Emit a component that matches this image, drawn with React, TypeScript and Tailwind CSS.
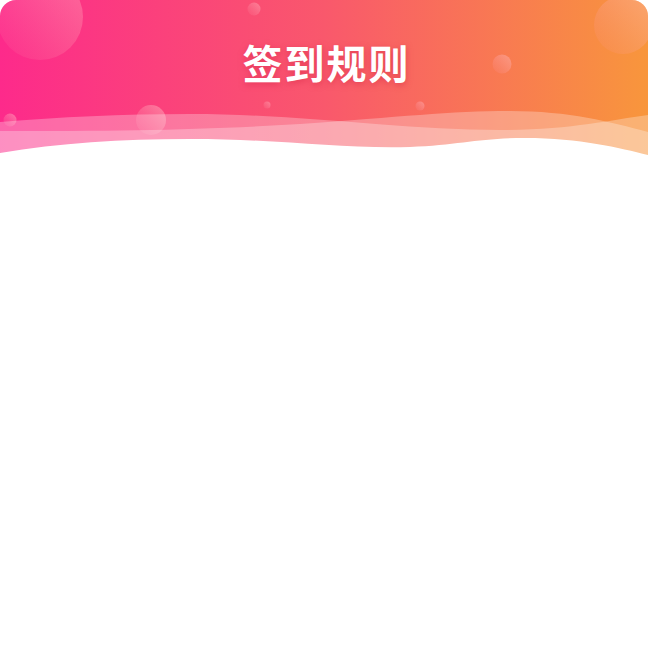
const Bubble = ({ cx, cy, r, o = 0.28 }: { cx: number; cy: number; r: number; o?: number }) => (
  <circle cx={cx} cy={cy} r={r} fill="url(#bubble)" opacity={o} />
);

const HeaderArt = () => (
  <svg className="absolute inset-0" width="648" height="160" viewBox="0 0 648 160">
    <defs>
      <linearGradient id="bg" x1="0" y1="0" x2="1" y2="0">
        <stop offset="0" stopColor="#fd2a8b" />
        <stop offset="0.5" stopColor="#f9586c" />
        <stop offset="1" stopColor="#f8963c" />
      </linearGradient>
      <linearGradient id="bubble" x1="1" y1="0" x2="0" y2="1">
        <stop offset="0" stopColor="#ffc2c8" stopOpacity="1" />
        <stop offset="1" stopColor="#ff9aae" stopOpacity="0.15" />
      </linearGradient>
    </defs>
    <rect width="648" height="160" fill="url(#bg)" />

    {/* bubbles */}
    <Bubble cx={40} cy={17} r={43} o={0.38} />
    <Bubble cx={623} cy={25} r={29} o={0.38} />
    <Bubble cx={254} cy={9} r={6.5} o={0.45} />
    <Bubble cx={502} cy={64} r={9.5} o={0.45} />
    <Bubble cx={267} cy={105} r={3.5} o={0.45} />
    <Bubble cx={420} cy={106} r={4.5} o={0.45} />
    <Bubble cx={151} cy={120} r={15} o={0.5} />
    <Bubble cx={10} cy={120} r={6.5} o={0.5} />

    {/* waves */}
    <path
      d="M0 122 C 60 117 120 114 190 114 C 300 114 400 130 500 130 C 570 130 610 120 648 115 L 648 160 L 0 160 Z"
      fill="#ffffff"
      opacity="0.28"
    />
    <path
      d="M0 131 C 120 131 200 130 300 124 C 400 117 450 111 510 111 C 570 111 610 122 648 132 L 648 160 L 0 160 Z"
      fill="#ffffff"
      opacity="0.28"
    />
    <path
      d="M0 153 C 60 143 120 139 190 139 C 280 139 340 149 410 147 C 460 145 480 138 525 138 C 580 138 620 148 648 155 L 648 160 L 0 160 Z"
      fill="#ffffff"
    />
  </svg>
);

export default function App() {
  return (
    <div className="w-[648px] h-[670px] bg-white">
      <div className="w-full h-full bg-white rounded-2xl overflow-hidden flex flex-col">
        <div className="relative h-[160px] shrink-0">
          <HeaderArt />
          <div className="relative flex justify-center pt-[42px] pl-[5px]">
            <h1 className="text-white text-[40px] leading-none font-bold tracking-[2px] [font-family:'Noto_Sans_CJK_SC','Noto_Sans',sans-serif] [text-shadow:0_2px_6px_rgba(214,40,70,0.55)]">
              签到规则
            </h1>
          </div>
        </div>
        <div className="flex-1" />
      </div>
    </div>
  );
}
